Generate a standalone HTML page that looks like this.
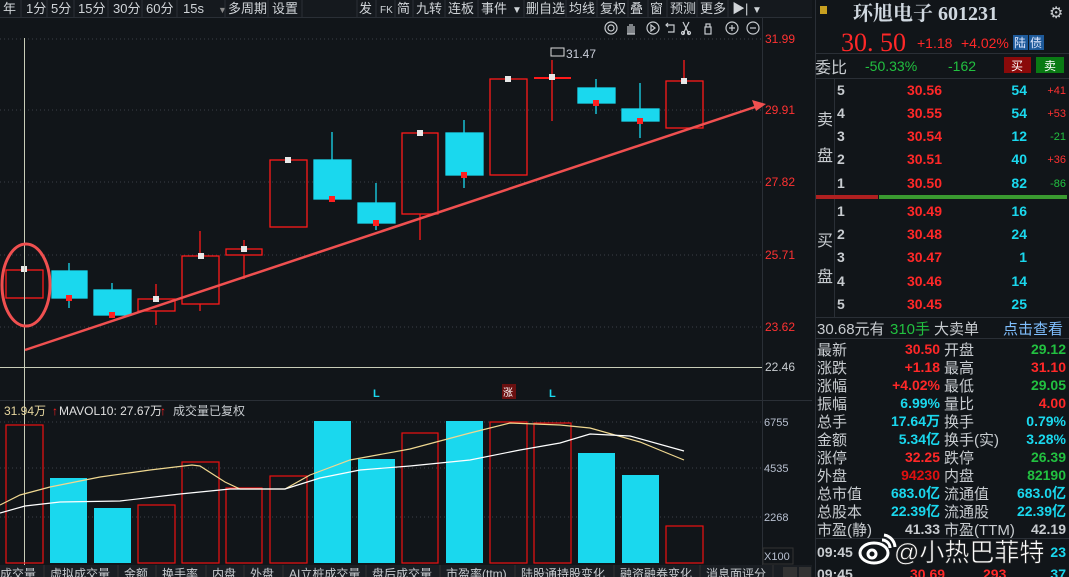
<!DOCTYPE html>
<html><head><meta charset="utf-8"><style>
html,body{margin:0;padding:0;background:#111519;width:1069px;height:577px;overflow:hidden}
svg{display:block}
text{font-family:"Liberation Sans","Noto Sans CJK SC",sans-serif}
text.serif{font-family:"Liberation Serif","Noto Serif CJK SC",serif}
</style></head><body>
<svg width="1069" height="577" viewBox="0 0 1069 577" xmlns="http://www.w3.org/2000/svg">
<rect width="1069" height="577" fill="#111519"/>
<!-- toolbar -->
<rect x="0" y="0" width="812" height="17" fill="#15191e"/>
<line x1="0" y1="17.5" x2="812" y2="17.5" stroke="#2a2f36"/>
<g font-size="13" fill="#d0d4d8">
<text x="3" y="13">年</text><text x="26" y="13">1分</text><text x="51" y="13">5分</text><text x="78" y="13">15分</text><text x="113" y="13">30分</text><text x="146" y="13">60分</text><text x="183" y="13">15s</text><text x="218" y="13" font-size="9" fill="#888">▼</text><text x="228" y="13">多周期</text><text x="272" y="13">设置</text>
<text x="359" y="13">发</text><text x="380" y="13" font-size="10">FK</text><text x="397" y="13">简</text><text x="416" y="13">九转</text><text x="448" y="13">连板</text><text x="481" y="13">事件</text><text x="512" y="13" font-size="10">▼</text><text x="526" y="13">删自选</text><text x="569" y="13">均线</text><text x="600" y="13">复权</text><text x="630" y="13">叠</text><text x="650" y="13">窗</text><text x="670" y="13">预测</text><text x="700" y="13">更多</text><text x="732" y="13">▶|</text><text x="752" y="13" font-size="10">▼</text>
</g>
<g stroke="#2a2f36"><line x1="21" y1="0" x2="21" y2="17"/><line x1="47" y1="0" x2="47" y2="17"/><line x1="74" y1="0" x2="74" y2="17"/><line x1="108" y1="0" x2="108" y2="17"/><line x1="142" y1="0" x2="142" y2="17"/><line x1="177" y1="0" x2="177" y2="17"/><line x1="225" y1="0" x2="225" y2="17"/><line x1="268" y1="0" x2="268" y2="17"/><line x1="302" y1="0" x2="302" y2="17"/><line x1="357" y1="0" x2="357" y2="17"/><line x1="376" y1="0" x2="376" y2="17"/><line x1="395" y1="0" x2="395" y2="17"/><line x1="413" y1="0" x2="413" y2="17"/><line x1="445" y1="0" x2="445" y2="17"/><line x1="478" y1="0" x2="478" y2="17"/><line x1="524" y1="0" x2="524" y2="17"/><line x1="566" y1="0" x2="566" y2="17"/><line x1="597" y1="0" x2="597" y2="17"/><line x1="628" y1="0" x2="628" y2="17"/><line x1="648" y1="0" x2="648" y2="17"/><line x1="667" y1="0" x2="667" y2="17"/><line x1="697" y1="0" x2="697" y2="17"/><line x1="728" y1="0" x2="728" y2="17"/></g>
<!-- chart tool icons -->
<g stroke="#c8ccd0" fill="none" stroke-width="1.2">
<circle cx="611" cy="28" r="6"/><circle cx="611" cy="28" r="3"/>
<path d="M628 34v-8M630 34v-10M632 34v-10M634 34v-8M627 34h8"/>
<circle cx="653" cy="28" r="6"/><path d="M651 25l4 3-4 3z"/>
<path d="M666 25h8v7h-6M668 23l-2 2 2 2"/>
<path d="M683 22l6 12M689 22l-6 12"/><circle cx="683" cy="33" r="1.5"/><circle cx="689" cy="33" r="1.5"/>
<rect x="705" y="27" width="6" height="7"/><path d="M706 27v-3h4v3"/>
<circle cx="732" cy="28" r="6"/><path d="M729 28h6M732 25v6"/>
<circle cx="753" cy="28" r="6"/><path d="M750 28h6"/>
</g>
<!-- grid -->
<g stroke="#3a4048" stroke-dasharray="1,3">
<line x1="0" y1="39" x2="762" y2="39"/><line x1="0" y1="110" x2="762" y2="110"/><line x1="0" y1="182" x2="762" y2="182"/><line x1="0" y1="255" x2="762" y2="255"/><line x1="0" y1="327" x2="762" y2="327"/>
<line x1="0" y1="422" x2="762" y2="422"/><line x1="0" y1="468" x2="762" y2="468"/><line x1="0" y1="517" x2="762" y2="517"/>
</g>
<line x1="762.5" y1="18" x2="762.5" y2="565" stroke="#2a2f36"/>
<line x1="0" y1="367.5" x2="762" y2="367.5" stroke="#c8ccb8"/>
<line x1="0" y1="400.5" x2="812" y2="400.5" stroke="#2a2f36"/>
<g font-size="12" fill="#ff3232">
<text x="765" y="43">31.99</text><text x="765" y="114">29.91</text><text x="765" y="186">27.82</text><text x="765" y="259">25.71</text><text x="765" y="331">23.62</text><text x="765" y="371" fill="#c8ccd0">22.46</text>
</g>
<g font-size="11" fill="#b8c0d0"><text x="764" y="426">6755</text><text x="764" y="472">4535</text><text x="764" y="521">2268</text><text x="764" y="560">X100</text></g>
<rect x="763" y="548" width="30" height="16" fill="none" stroke="#333"/>
<!-- candles -->
<g stroke-width="1.3">
<g stroke="#ff1a1a" fill="none">
<rect x="6" y="270" width="37" height="28"/>
<line x1="156" y1="284" x2="156" y2="299"/><line x1="156" y1="311" x2="156" y2="325"/><rect x="138" y="299" width="37" height="12"/>
<line x1="200" y1="231" x2="200" y2="256"/><line x1="200" y1="304" x2="200" y2="311"/><rect x="182" y="256" width="37" height="48"/>
<line x1="244" y1="240" x2="244" y2="249"/><line x1="244" y1="255" x2="244" y2="279"/><rect x="226" y="249" width="36" height="6"/>
<rect x="270" y="160" width="37" height="67"/>
<line x1="420" y1="214" x2="420" y2="240"/><rect x="402" y="133" width="36" height="81"/>
<rect x="490" y="79" width="37" height="96"/>
<line x1="552" y1="60" x2="552" y2="121"/><line x1="534" y1="78" x2="571" y2="78" stroke-width="2"/>
<line x1="684" y1="60" x2="684" y2="81"/><rect x="666" y="81" width="37" height="47"/>
</g>
<g stroke="#1ad8ee" fill="#1ad8ee">
<line x1="69" y1="263" x2="69" y2="308"/><rect x="52" y="271" width="35" height="27"/>
<line x1="112" y1="283" x2="112" y2="290"/><rect x="94" y="290" width="37" height="25"/>
<line x1="332" y1="132" x2="332" y2="199"/><rect x="314" y="160" width="37" height="39"/>
<line x1="376" y1="183" x2="376" y2="230"/><rect x="358" y="203" width="37" height="20"/>
<line x1="464" y1="120" x2="464" y2="188"/><rect x="446" y="133" width="37" height="42"/>
<line x1="596" y1="79" x2="596" y2="114"/><rect x="578" y="88" width="37" height="15"/>
<line x1="640" y1="83" x2="640" y2="138"/><rect x="622" y="109" width="37" height="12"/>
</g>
</g>
<!-- markers -->
<g fill="#e8e8e8">
<rect x="21" y="266" width="6" height="6"/><rect x="198" y="253" width="6" height="6"/><rect x="241" y="246" width="6" height="6"/><rect x="285" y="157" width="6" height="6"/><rect x="417" y="130" width="6" height="6"/><rect x="505" y="76" width="6" height="6"/><rect x="549" y="74" width="6" height="6"/><rect x="681" y="78" width="6" height="6"/><rect x="153" y="296" width="6" height="6"/>
</g>
<g fill="#ff2020">
<rect x="66" y="295" width="6" height="6"/><rect x="109" y="312" width="6" height="6"/><rect x="329" y="196" width="6" height="6"/><rect x="373" y="220" width="6" height="6"/><rect x="461" y="172" width="6" height="6"/><rect x="593" y="100" width="6" height="6"/><rect x="637" y="118" width="6" height="6"/>
</g>
<rect x="551" y="48" width="13" height="8" fill="none" stroke="#ddd"/>
<text x="566" y="58" font-size="12" fill="#c8ccd8">31.47</text>
<!-- crosshair vertical -->
<line x1="24.5" y1="38" x2="24.5" y2="565" stroke="#c8ccb8"/>
<!-- ellipse & trend -->
<ellipse cx="26" cy="285" rx="24" ry="41" fill="none" stroke="#f05050" stroke-width="3"/>
<line x1="25" y1="350" x2="758" y2="106" stroke="#f05050" stroke-width="2.5"/>
<path d="M766 104 L752 100 L756 111 Z" fill="#f05050"/>
<text x="373" y="397" font-size="11" fill="#1ad8ee" font-weight="bold">L</text>
<text x="549" y="397" font-size="11" fill="#1ad8ee" font-weight="bold">L</text>
<rect x="502" y="384" width="14" height="15" fill="#6a1010"/><text x="503" y="396" font-size="10" fill="#fff">涨</text>
<!-- volume -->
<text x="4" y="415" font-size="12" fill="#e8d8a0">31.94万</text>
<text x="52" y="415" font-size="12" fill="#ff2020">↑</text>
<text x="59" y="415" font-size="12" fill="#e0e0e0">MAVOL10: 27.67万</text>
<text x="160" y="415" font-size="12" fill="#ff2020">↑</text>
<text x="173" y="415" font-size="12" fill="#c8ccd0">成交量已复权</text>
<g stroke="#ee1010" fill="none" stroke-width="1.2">
<rect x="6" y="425" width="37" height="138"/><rect x="138" y="505" width="37" height="58"/><rect x="182" y="462" width="37" height="101"/><rect x="226" y="488" width="36" height="75"/><rect x="270" y="476" width="37" height="87"/><rect x="402" y="433" width="36" height="130"/><rect x="490" y="422" width="37" height="141"/><rect x="534" y="423" width="37" height="140"/><rect x="666" y="526" width="37" height="37"/>
</g>
<g fill="#1ad8ee">
<rect x="50" y="478" width="37" height="85"/><rect x="94" y="508" width="37" height="55"/><rect x="314" y="421" width="37" height="142"/><rect x="358" y="459" width="37" height="104"/><rect x="446" y="421" width="37" height="142"/><rect x="578" y="453" width="37" height="110"/><rect x="622" y="475" width="37" height="88"/>
</g>
<polyline fill="none" stroke="#f0d890" stroke-width="1.2" points="0,505 20,495 50,487 100,477 150,470 192,465 200,466 225,482 240,489 285,489 310,475 350,460 410,449 470,433 510,423 560,425 590,428 640,442 662,451 684,460"/>
<polyline fill="none" stroke="#ffffff" stroke-width="1.2" points="0,513 25,506 60,502 120,501 180,494 230,489 285,489 320,478 360,470 410,466 470,460 520,450 560,443 590,434 630,436 684,451"/>
<!-- bottom tabs -->
<rect x="0" y="565" width="812" height="12" fill="#1a1e23"/>
<g font-size="12" fill="#c8ccd0"><text x="0" y="578">成交量</text><text x="50" y="578">虚拟成交量</text><text x="124" y="578">金额</text><text x="162" y="578">换手率</text><text x="212" y="578">内盘</text><text x="250" y="578">外盘</text><text x="289" y="578">AI立桩成交量</text><text x="372" y="578">盘后成交量</text><text x="446" y="578">市盈率(ttm)</text><text x="521" y="578">陆股通持股变化</text><text x="620" y="578">融资融券变化</text><text x="706" y="578">消息面评分</text></g>
<g stroke="#333"><line x1="44" y1="565" x2="44" y2="577"/><line x1="118" y1="565" x2="118" y2="577"/><line x1="156" y1="565" x2="156" y2="577"/><line x1="206" y1="565" x2="206" y2="577"/><line x1="244" y1="565" x2="244" y2="577"/><line x1="283" y1="565" x2="283" y2="577"/><line x1="366" y1="565" x2="366" y2="577"/><line x1="440" y1="565" x2="440" y2="577"/><line x1="515" y1="565" x2="515" y2="577"/><line x1="614" y1="565" x2="614" y2="577"/><line x1="700" y1="565" x2="700" y2="577"/><line x1="773" y1="565" x2="773" y2="577"/></g>
<rect x="783" y="567" width="14" height="10" fill="#333"/><rect x="799" y="567" width="12" height="10" fill="#333"/>
<!-- right panel -->
<line x1="815.5" y1="0" x2="815.5" y2="577" stroke="#2a2f36"/>
<rect x="820" y="6" width="7" height="8" fill="#c8a020"/>
<text class="serif" x="853" y="20" font-size="20" fill="#d0d8e0" font-weight="bold">环旭电子 601231</text>
<text x="1049" y="18" font-size="16" fill="#c8ccd0">⚙</text>
<text class="serif" x="841" y="51" font-size="26" fill="#ff2828">30. 50</text>
<text x="917" y="48" font-size="14" fill="#ff2828">+1.18</text>
<text x="961" y="48" font-size="14" fill="#ff2828">+4.02%</text>
<rect x="1013" y="35" width="15" height="15" fill="#1e5a9a"/><rect x="1029" y="35" width="15" height="15" fill="#1e5a9a"/>
<text x="1014" y="47" font-size="12" fill="#e0e8ff">陆</text><text x="1030" y="47" font-size="12" fill="#e0e8ff">债</text>
<line x1="816" y1="53.5" x2="1069" y2="53.5" stroke="#2a2f36"/>
<text x="815" y="73" font-size="16" fill="#c8ccd0">委比</text>
<text x="865" y="71" font-size="14" fill="#22c040">-50.33%</text>
<text x="948" y="71" font-size="14" fill="#22c040">-162</text>
<rect x="1004" y="57" width="27" height="16" fill="#8a0a0a"/><text x="1011" y="70" font-size="12" fill="#fff">买</text>
<rect x="1036" y="57" width="28" height="16" fill="#0a7a14"/><text x="1044" y="70" font-size="12" fill="#fff">卖</text>
<line x1="816" y1="78.5" x2="1069" y2="78.5" stroke="#2a2f36"/>
<line x1="834.5" y1="78" x2="834.5" y2="317" stroke="#2a2f36"/>
<g font-size="16" fill="#c8ccd0"><text x="817" y="125">卖</text><text x="817" y="161">盘</text><text x="817" y="246">买</text><text x="817" y="282">盘</text></g>
<g font-size="14" font-weight="bold">
<g fill="#c8ccd0"><text x="837" y="95">5</text><text x="837" y="118">4</text><text x="837" y="141">3</text><text x="837" y="164">2</text><text x="837" y="188">1</text>
<text x="837" y="216">1</text><text x="837" y="239">2</text><text x="837" y="262">3</text><text x="837" y="286">4</text><text x="837" y="309">5</text></g>
<g fill="#ff2828" text-anchor="end"><text x="942" y="95">30.56</text><text x="942" y="118">30.55</text><text x="942" y="141">30.54</text><text x="942" y="164">30.51</text><text x="942" y="188">30.50</text>
<text x="942" y="216">30.49</text><text x="942" y="239">30.48</text><text x="942" y="262">30.47</text><text x="942" y="286">30.46</text><text x="942" y="309">30.45</text></g>
<g fill="#1ad8ee" text-anchor="end"><text x="1027" y="95">54</text><text x="1027" y="118">54</text><text x="1027" y="141">12</text><text x="1027" y="164">40</text><text x="1027" y="188">82</text>
<text x="1027" y="216">16</text><text x="1027" y="239">24</text><text x="1027" y="262">1</text><text x="1027" y="286">14</text><text x="1027" y="309">25</text></g>
</g>
<g font-size="11" text-anchor="end"><text x="1066" y="94" fill="#ff3232">+41</text><text x="1066" y="117" fill="#ff3232">+53</text><text x="1066" y="140" fill="#22c040">-21</text><text x="1066" y="163" fill="#ff3232">+36</text><text x="1066" y="187" fill="#22c040">-86</text></g>
<rect x="816" y="195" width="62" height="4" fill="#b02020"/><rect x="879" y="195" width="188" height="4" fill="#3a9a30"/>
<line x1="816" y1="317.5" x2="1069" y2="317.5" stroke="#2a2f36"/>
<text x="817" y="334" font-size="15" fill="#c8ccd0">30.68元有</text>
<text x="890" y="334" font-size="15" fill="#22c040">310手</text>
<text x="934" y="334" font-size="15" fill="#c8ccd0">大卖单</text>
<text x="1003" y="334" font-size="15" fill="#80c0ff">点击查看</text>
<line x1="816" y1="338.5" x2="1069" y2="338.5" stroke="#2a2f36"/>
<g font-size="15" fill="#c8ccd0">
<text x="817" y="355">最新</text><text x="817" y="373">涨跌</text><text x="817" y="391">涨幅</text><text x="817" y="409">振幅</text><text x="817" y="427">总手</text><text x="817" y="445">金额</text><text x="817" y="463">涨停</text><text x="817" y="481">外盘</text><text x="817" y="499">总市值</text><text x="817" y="517">总股本</text><text x="817" y="535">市盈(静)</text>
<text x="944" y="355">开盘</text><text x="944" y="373">最高</text><text x="944" y="391">最低</text><text x="944" y="409">量比</text><text x="944" y="427">换手</text><text x="944" y="445">换手(实)</text><text x="944" y="463">跌停</text><text x="944" y="481">内盘</text><text x="944" y="499">流通值</text><text x="944" y="517">流通股</text><text x="944" y="535">市盈(TTM)</text>
</g>
<g font-size="14" font-weight="bold" text-anchor="end">
<text x="940" y="354" fill="#ff2828">30.50</text><text x="940" y="372" fill="#ff2828">+1.18</text><text x="940" y="390" fill="#ff2828">+4.02%</text><text x="940" y="408" fill="#1ad8ee">6.99%</text><text x="940" y="426" fill="#1ad8ee">17.64万</text><text x="940" y="444" fill="#1ad8ee">5.34亿</text><text x="940" y="462" fill="#ff2828">32.25</text><text x="940" y="480" fill="#e01010">94230</text><text x="940" y="498" fill="#1ad8ee">683.0亿</text><text x="940" y="516" fill="#1ad8ee">22.39亿</text><text x="940" y="534" fill="#c8ccd0">41.33</text>
<text x="1066" y="354" fill="#22c040">29.12</text><text x="1066" y="372" fill="#ff2828">31.10</text><text x="1066" y="390" fill="#22c040">29.05</text><text x="1066" y="408" fill="#ff2828">4.00</text><text x="1066" y="426" fill="#1ad8ee">0.79%</text><text x="1066" y="444" fill="#1ad8ee">3.28%</text><text x="1066" y="462" fill="#22c040">26.39</text><text x="1066" y="480" fill="#22c040">82190</text><text x="1066" y="498" fill="#1ad8ee">683.0亿</text><text x="1066" y="516" fill="#1ad8ee">22.39亿</text><text x="1066" y="534" fill="#c8ccd0">42.19</text>
</g>
<line x1="816" y1="538.5" x2="1069" y2="538.5" stroke="#2a2f36"/>
<g font-size="14" font-weight="bold">
<text x="817" y="557" fill="#c8ccd0">09:45</text><text x="1066" y="557" fill="#1ad8ee" text-anchor="end">23</text><text x="1066" y="579" fill="#1ad8ee" text-anchor="end">37</text>
<text x="817" y="579" fill="#c8ccd0">09:45</text><text x="910" y="579" fill="#ff2828">30.69</text><text x="983" y="579" fill="#ff2828">293</text>
</g>
<!-- watermark -->
<g fill="none" stroke="#fff" stroke-width="3"><ellipse cx="874" cy="553" rx="14" ry="10"/><circle cx="872" cy="554" r="4"/><path d="M882 540a8 8 0 0 1 8 8M884 535a13 13 0 0 1 11 12"/></g>
<text x="894" y="561" font-size="25" fill="#fff" stroke="#333" stroke-width="0.6">@小热巴菲特</text>
</svg>
</body></html>
